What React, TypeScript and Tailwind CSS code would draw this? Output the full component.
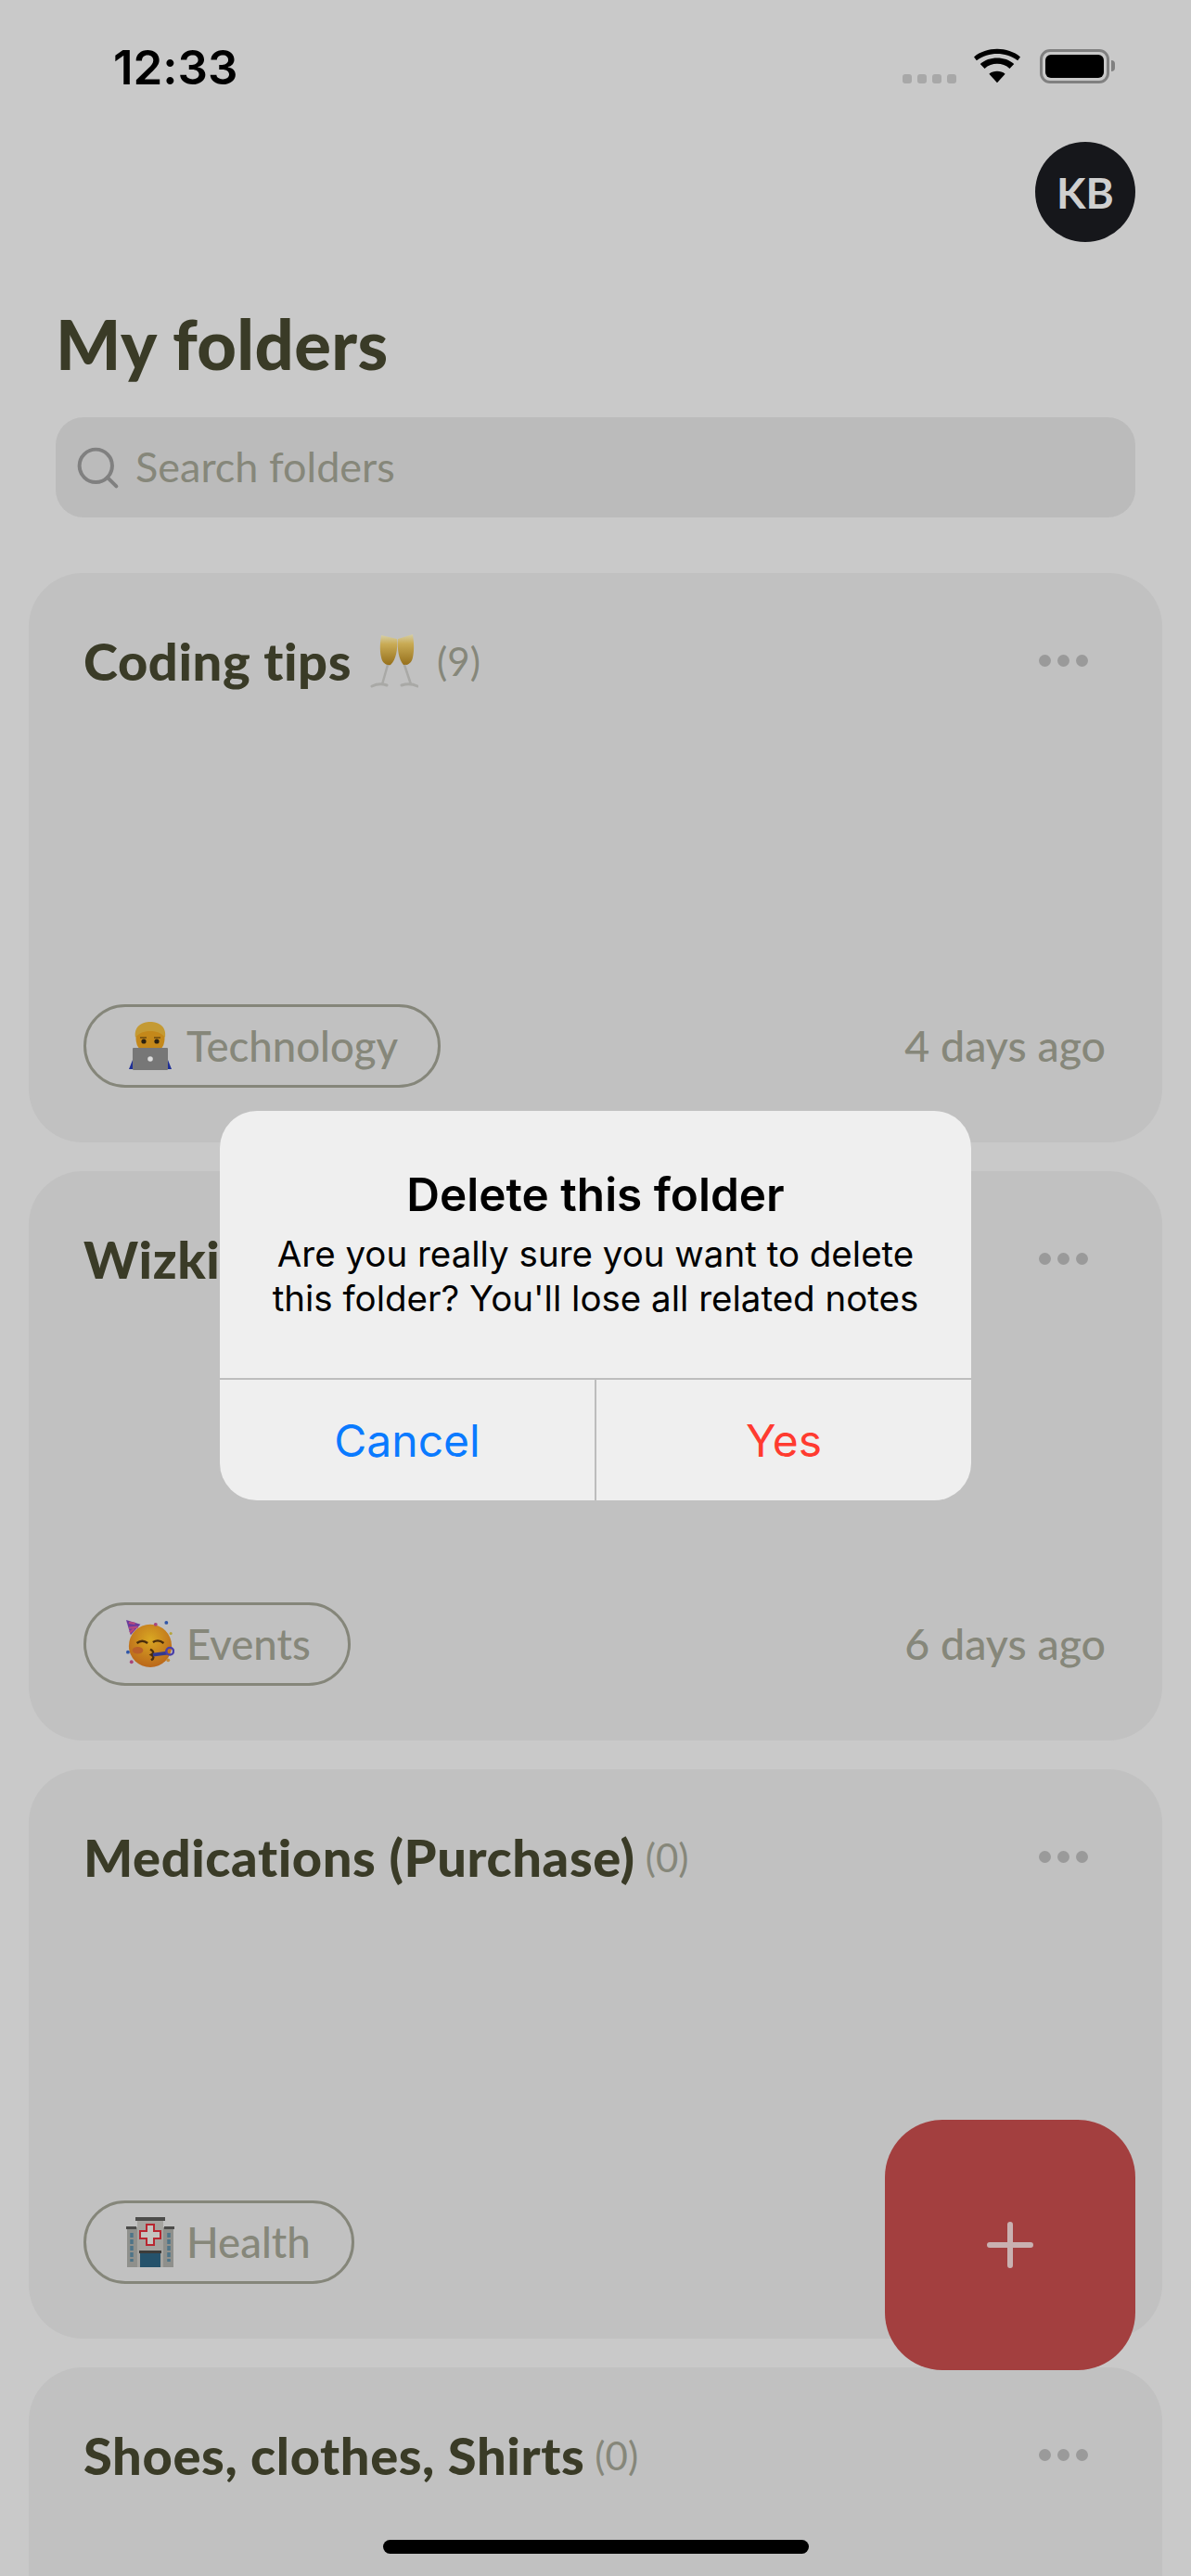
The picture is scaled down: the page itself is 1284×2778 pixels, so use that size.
import { Search } from "lucide-react";

const font = "font-['Lato','Noto_Sans',sans-serif] [font-variant-ligatures:none]";

const Glasses = () => (
  <svg width="52" height="58" viewBox="0 0 52 58" className="mx-[9px]">
    <defs>
      <linearGradient id="wine" x1="0" y1="0" x2="0" y2="1">
        <stop offset="0" stopColor="#d6cfa6" />
        <stop offset="0.3" stopColor="#c9ab55" />
        <stop offset="1" stopColor="#96701c" />
      </linearGradient>
    </defs>
    <path d="M12 1 L29 5 C30 16 28 28 22 33 C18 34 13 31 12 25 C10 16 11 8 12 1Z" fill="url(#wine)" />
    <path d="M30 5 L46 0 C47 8 48 16 46 25 C45 31 40 34 36 33 C31 28 29 16 30 5Z" fill="url(#wine)" />
    <path d="M19 33 L13 54 M37 33 L44 54" stroke="#a9a9a6" strokeWidth="2.5" />
    <path d="M2 56 Q10 52 18 55 M34 55 Q43 52 51 56" stroke="#a9a9a6" strokeWidth="3" strokeLinecap="round" fill="none" />
  </svg>
);

const Technologist = () => (
  <svg width="46" height="52" viewBox="0 0 46 52">
    <ellipse cx="23" cy="18" rx="15.5" ry="17" fill="#c4881a" />
    <path d="M7 17 C5 5 14 0 23 0 C32 0 41 5 39 17 C35 11 28 10 23 10 C18 10 11 11 7 17Z" fill="#c49a34" />
    <path d="M12 17 H19 M27 17 H34" stroke="#6b4a12" strokeWidth="1.5" />
    <circle cx="16" cy="21" r="2.6" fill="#2c2210" />
    <circle cx="30" cy="21" r="2.6" fill="#2c2210" />
    <path d="M0 51 L4 41 H42 L46 51Z" fill="#1f2f96" />
    <rect x="4" y="28" width="38" height="24" rx="1" fill="#777777" />
    <circle cx="23" cy="40" r="2.8" fill="#dcdcdc" />
  </svg>
);

const Party = () => (
  <svg width="54" height="54" viewBox="0 0 54 54">
    <defs>
      <radialGradient id="face" cx="0.5" cy="0.35" r="0.7">
        <stop offset="0" stopColor="#d9a822" />
        <stop offset="1" stopColor="#b8621a" />
      </radialGradient>
    </defs>
    <circle cx="27" cy="29" r="24" fill="url(#face)" />
    <path d="M0 0 L16 5 L5 17Z" fill="#6a3b9c" />
    <path d="M3 3 L10 4 M3 9 L13 8 M4 14 L9 10" stroke="#b5487f" strokeWidth="2.5" />
    <path d="M12 26 Q18 21 24 26 M30 25 Q36 21 42 26" stroke="#4a2d0c" strokeWidth="2.5" fill="none" />
    <ellipse cx="13" cy="34" rx="6" ry="4" fill="#b9602a" />
    <path d="M27 33 Q33 36 28 39 Q33 42 28 45" stroke="#4a2d0c" strokeWidth="2.5" fill="none" />
    <path d="M30 39 L46 37" stroke="#33398f" strokeWidth="4" />
    <circle cx="49" cy="35" r="4" fill="none" stroke="#4a3fa8" strokeWidth="2.5" />
    <circle cx="33" cy="5" r="2" fill="#a8457a" />
    <circle cx="45" cy="3" r="2" fill="#2f56a8" />
    <circle cx="50" cy="15" r="1.6" fill="#b5a43a" />
    <circle cx="2" cy="36" r="2" fill="#2f56a8" />
    <circle cx="6" cy="47" r="2" fill="#a8457a" />
    <circle cx="47" cy="45" r="2" fill="#c48a3a" />
  </svg>
);

const Hospital = () => (
  <svg width="52" height="54" viewBox="0 0 52 54">
    <rect x="1" y="11" width="50" height="43" fill="#8f908c" />
    <rect x="12" y="2" width="28" height="52" fill="#a5a4a0" />
    <rect x="10" y="0" width="32" height="4" fill="#4c4c4a" />
    <rect x="0" y="10" width="11" height="3" fill="#4c4c4a" />
    <rect x="41" y="10" width="11" height="3" fill="#4c4c4a" />
    <path d="M22 8 H30 V15 H37 V23 H30 V30 H22 V23 H15 V15 H22Z" fill="#c4c3bf" stroke="#b82630" strokeWidth="2" />
    <rect x="15" y="38" width="22" height="16" fill="#25526b" />
    <rect x="14" y="36" width="24" height="3" fill="#3c3c3a" />
    <path d="M6 17 V48 M46 17 V48" stroke="#4e7488" strokeWidth="3.5" strokeDasharray="5 2" />
  </svg>
);

const folders = [
  { title: "Coding tips", emoji: <Glasses />, count: 9, tag: "Technology", tagIcon: <Technologist />, tagWidth: "w-[385px]", time: "4 days ago" },
  { title: "Wizkid", count: 2, tag: "Events", tagIcon: <Party />, tagWidth: "w-[288px]", time: "6 days ago" },
  { title: "Medications (Purchase)", count: 0, tag: "Health", tagIcon: <Hospital />, tagWidth: "w-[292px]", time: "" },
  { title: "Shoes, clothes, Shirts", count: 0 },
];

export default function App() {
  return (
    <div className={`relative w-[1284px] h-[2778px] overflow-hidden bg-[#c9c9c9] ${font}`}>
      {/* Status bar */}
      <div className="flex items-center justify-between h-[62px] mt-[40px] pl-[122px] pr-[82px]">
        <span className="mt-[2px] font-['Inter',sans-serif] font-semibold text-[51px] leading-none text-black">12:33</span>
        <div className="flex items-center">
          <div className="flex gap-[6px] mt-[27px] mr-[19px]">
            <span className="w-[10px] h-[10px] rounded-[3px] bg-[#a8a8a8]" />
            <span className="w-[10px] h-[10px] rounded-[3px] bg-[#a8a8a8]" />
            <span className="w-[10px] h-[10px] rounded-[3px] bg-[#a8a8a8]" />
            <span className="w-[10px] h-[10px] rounded-[3px] bg-[#a8a8a8]" />
          </div>
          <svg width="50" height="38" viewBox="0 0 52 38" className="mr-[21px]">
            <path d="M26 38 L17 28 C22 24 30 24 35 28Z M12 22 L7 17 C17 8 35 8 45 17 L40 22 C32 15 20 15 12 22Z M3 13 L0 9 C14 -3 38 -3 52 9 L49 13 C35 3 17 3 3 13Z" fill="#000" />
          </svg>
          <div className="flex items-center gap-[2px]">
            <div className="w-[75px] h-[37px] rounded-[11px] border-[3px] border-[#808080] p-[3px]">
              <div className="w-full h-full rounded-[6px] bg-black" />
            </div>
            <span className="w-[4px] h-[12px] rounded-r-full bg-[#808080]" />
          </div>
        </div>
      </div>

      {/* Avatar */}
      <div className="flex justify-end pr-[60px] mt-[51px]">
        <div className="flex items-center justify-center w-[108px] h-[108px] rounded-full bg-[#16171b] text-[#cfcfcf] text-[46px] font-bold">KB</div>
      </div>

      <h1 className="mt-[67px] ml-[60px] text-[74px] leading-[86px] tracking-[0.4px] font-black text-[#3a3b27]">My folders</h1>

      {/* Search */}
      <div className="flex items-center gap-[14px] h-[108px] mt-[36px] mx-[60px] pl-[19px] rounded-[30px] bg-[#bbbbbb]">
        <Search size={53} strokeWidth={1.8} className="text-[#808080]" />
        <span className="text-[45px] text-[#86877a]">Search folders</span>
      </div>

      {/* Folder cards */}
      <div className="flex flex-col gap-[31px] mx-[31px] mt-[60px]">
        {folders.map((folder) => (
          <div key={folder.title} className="flex flex-col justify-between shrink-0 h-[614px] rounded-[58px] bg-[#c1c1c1] pt-[63px] pb-[59px] pl-[59px] pr-[61px]">
            <div className="flex items-start justify-between">
              <div className="flex items-center gap-[11px]">
                <span className="text-[56px] leading-[64px] tracking-[0.6px] font-black text-[#3a3b27]">{folder.title}</span>
                {folder.emoji}
                <span className="text-[42px] text-[#86877a]">({folder.count})</span>
              </div>
              <div className="flex gap-[7px] mt-[25px] mr-[19px]">
                <span className="w-[13px] h-[13px] rounded-full bg-[#9a9a9a]" />
                <span className="w-[13px] h-[13px] rounded-full bg-[#9a9a9a]" />
                <span className="w-[13px] h-[13px] rounded-full bg-[#9a9a9a]" />
              </div>
            </div>
            {folder.tag && (
              <div className="flex items-center justify-between">
                <div className={`flex items-center gap-[13px] h-[90px] pl-[43px] rounded-full border-[3px] border-[#85867a] text-[45.5px] font-medium text-[#86877a] ${folder.tagWidth}`}>
                  <span className="flex justify-center w-[52px]">{folder.tagIcon}</span>
                  {folder.tag}
                </div>
                <span className="text-[46.5px] font-medium text-[#86877a]">{folder.time}</span>
              </div>
            )}
          </div>
        ))}
      </div>

      {/* Add button */}
      <div className="absolute left-[954px] top-[2286px] flex items-center justify-center w-[270px] h-[270px] rounded-[62px] bg-[#a33f3f]">
        <svg width="52" height="52" viewBox="0 0 52 52">
          <path d="M26 4 V48 M4 26 H48" stroke="#c9b1b1" strokeWidth="6" strokeLinecap="round" />
        </svg>
      </div>

      {/* Home indicator */}
      <div className="absolute left-[413px] top-[2739px] w-[459px] h-[15px] rounded-full bg-black" />

      {/* Delete dialog */}
      <div className="absolute left-[237px] top-[1198px] w-[810px] h-[420px] flex flex-col rounded-[40px] bg-[#efefef] font-['Inter','Liberation_Sans',sans-serif]">
        <div className="flex flex-col items-center flex-1 pt-[60px] text-black">
          <div className="text-[49.5px] leading-[60px] font-semibold">Delete this folder</div>
          <div className="mt-[11px] text-[38.5px] leading-[47.5px] text-center">
            Are you really sure you want to delete
            <br />
            this folder? You'll lose all related notes
          </div>
        </div>
        <div className="flex h-[132px] border-t-2 border-[#bdbdbd] text-[48px]">
          <div className="flex items-center justify-center flex-1 pt-[2px] border-r-2 border-[#bdbdbd] text-[#0a7aff]">Cancel</div>
          <div className="flex items-center justify-center flex-1 pt-[2px] text-[#ff3b30]">Yes</div>
        </div>
      </div>
    </div>
  );
}
